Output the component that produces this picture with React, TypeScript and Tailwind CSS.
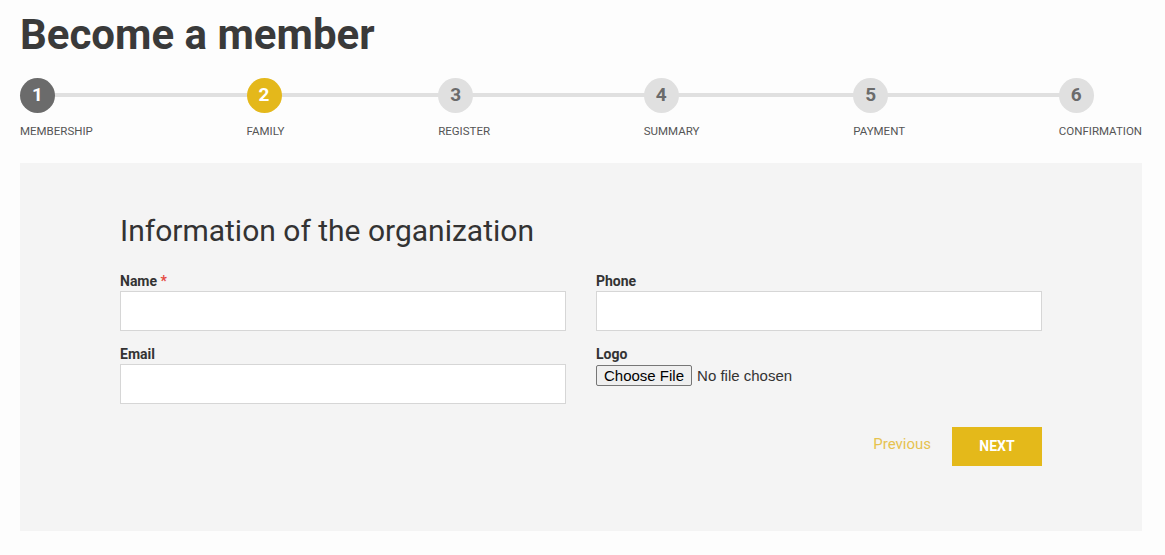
import React from "react";

const steps = [
  { n: 1, label: "MEMBERSHIP", state: "done" },
  { n: 2, label: "FAMILY", state: "active" },
  { n: 3, label: "REGISTER", state: "todo" },
  { n: 4, label: "SUMMARY", state: "todo" },
  { n: 5, label: "PAYMENT", state: "todo" },
  { n: 6, label: "CONFIRMATION", state: "todo" },
];

function Field({ label, required }: { label: string; required?: boolean }) {
  return (
    <div className="flex flex-col">
      <label className="text-[14px] leading-[20px] font-bold text-[#333]">
        {label}
        {required && <span className="text-[#e5483f]"> *</span>}
      </label>
      <input
        type="text"
        className="h-[40px] w-full border border-[#d6d6d6] bg-white outline-none"
      />
    </div>
  );
}

export default function App() {
  return (
    <div
      className="min-h-[555px] w-full bg-[#fdfdfd] px-[20px] pt-[10px]"
      style={{ fontFamily: "Roboto, 'Liberation Sans', sans-serif" }}
    >
      <h1 className="text-[42px] leading-[50px] font-bold text-[#3a3a3a]">Become a member</h1>

      <div className="relative mt-[18px] w-[1122px]">
        <div className="absolute left-[17px] right-[66px] top-[15px] h-[4px] bg-[#e0e0e0]" />
        <div className="relative flex justify-between">
          {steps.map((s) => (
            <div key={s.n} className="flex flex-col items-start">
              <div
                className={
                  "flex h-[35px] w-[35px] items-center justify-center rounded-full text-[19px] font-bold " +
                  (s.state === "done"
                    ? "bg-[#6b6b6b] text-white"
                    : s.state === "active"
                    ? "bg-[#e4b81b] text-white"
                    : "bg-[#e0e0e0] text-[#6b6b6b]")
                }
              >
                {s.n}
              </div>
              <div className="mt-[11px] text-[11.5px] leading-[14px] text-[#555]">{s.label}</div>
            </div>
          ))}
        </div>
      </div>

      <div className="mt-[25px] w-[1122px] bg-[#f4f4f4] px-[100px] pt-[50px] pb-[65px]">
        <h2 className="text-[30px] leading-[36px] font-normal text-[#333]">
          Information of the organization
        </h2>
        <div className="mt-[22px] grid grid-cols-2 gap-x-[30px] gap-y-[13px]">
          <Field label="Name" required />
          <Field label="Phone" />
          <Field label="Email" />
          <div className="flex flex-col">
            <label className="text-[14px] leading-[20px] font-bold text-[#333]">Logo</label>
            <input
              type="file"
              className="mt-[1px] text-[15px] leading-[19px] text-[#333] file:mr-[5px] file:rounded-[2px] file:border file:border-solid file:border-[#767676] file:bg-[#efefef] file:px-[7px] file:py-[0px] file:text-[15px] file:text-black"
              style={{ fontFamily: "'Liberation Sans', Arial, sans-serif" }}
            />
          </div>
        </div>
        <div className="mt-[23px] flex items-center justify-end gap-[21px]">
          <button className="text-[15px] leading-[20px] text-[#e6c24f] mb-[5px]">Previous</button>
          <button className="h-[39px] w-[90px] bg-[#e4b91a] text-[14px] font-bold text-white">
            NEXT
          </button>
        </div>
      </div>
    </div>
  );
}
